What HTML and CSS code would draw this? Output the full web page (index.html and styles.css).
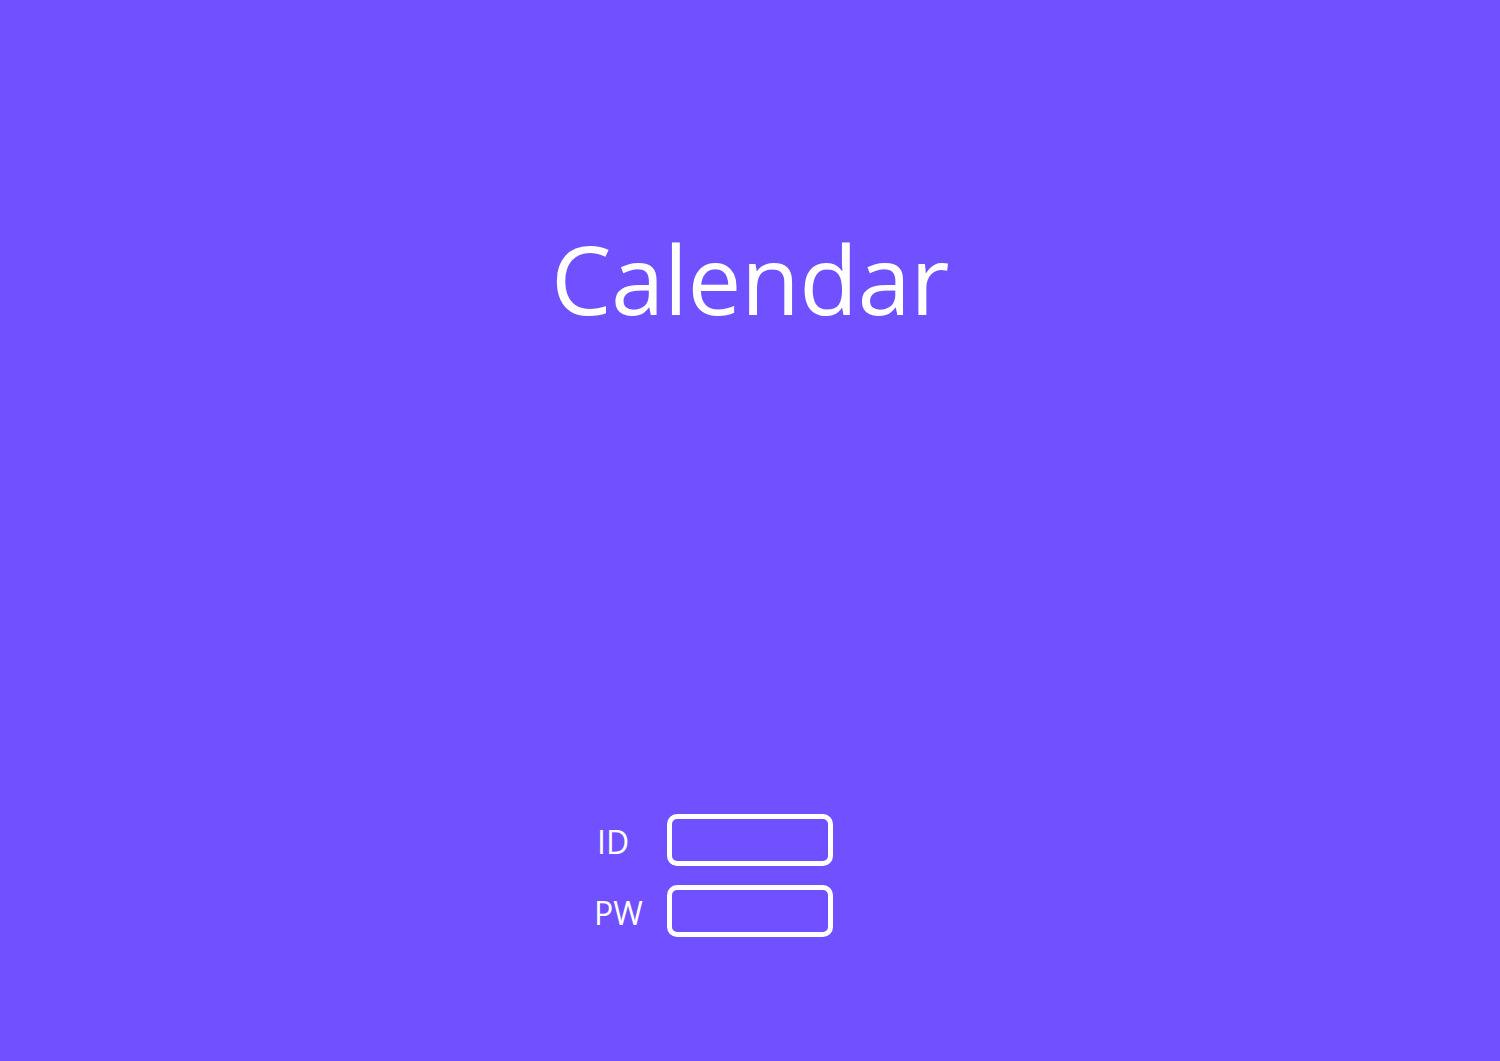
FILE: index.html
```html
<!DOCTYPE html>
<html>
<head>
<meta charset="utf-8">
<link rel="stylesheet" href="styles.css">
</head>
<body>
<main class="page">
  <h1 class="title">Calendar</h1>
  <form class="login">
    <label class="label label-id" for="id">ID</label>
    <input class="field" id="id" type="text">
    <label class="label" for="pw">PW</label>
    <input class="field" id="pw" type="password">
  </form>
</main>
</body>
</html>
```
FILE: styles.css
```css
html, body {
  margin: 0;
  padding: 0;
}
body {
  background: #7151ff;
  font-family: "Open Sans", "Noto Sans", sans-serif;
  color: #fff;
}
.page {
  height: 1061px;
  display: flex;
  flex-direction: column;
  align-items: center;
}
.title {
  margin: 208px 0 0 0;
  font-weight: 400;
  font-size: 96px;
  letter-spacing: -0.5px;
  line-height: 140px;
}
.login {
  margin: 466px 0 0 -73px;
  display: grid;
  grid-template-columns: 73px 166px;
  row-gap: 19px;
  align-items: center;
}
.label {
  font-size: 32px;
  line-height: 40px;
  padding-top: 4px;
}
.label-id {
  padding-left: 3px;
}
.field {
  box-sizing: border-box;
  width: 166px;
  height: 52px;
  border: 5px solid #fff;
  border-radius: 10px;
  background: transparent;
  margin: 0;
  padding: 0;
}
```
